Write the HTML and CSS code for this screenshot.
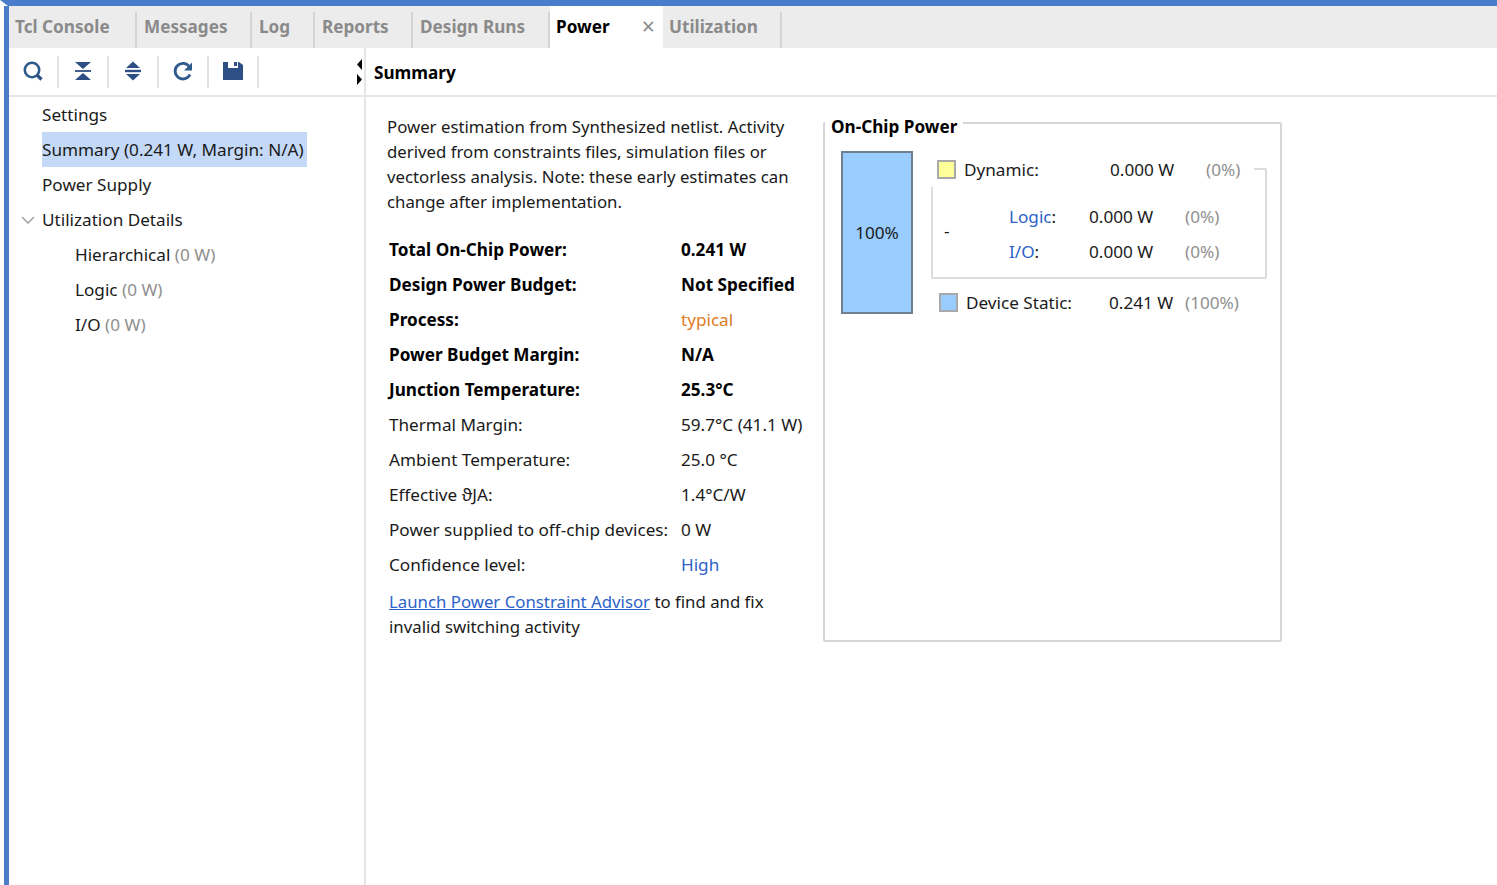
FILE: index.html
```html
<!DOCTYPE html>
<html lang="en">
<head>
    <meta charset="UTF-8">
    <title>Power</title>
    <link rel="stylesheet" href="styles.css">
</head>
<body>
<div class="frame">
    <div class="tabs">
        <div class="tab">Tcl Console</div>
        <div class="tab tab-messages">Messages</div>
        <div class="tab tab-log">Log</div>
        <div class="tab tab-reports">Reports</div>
        <div class="tab tab-runs">Design Runs</div>
        <div class="tab-active"><span>Power</span><span class="tab-close">&#215;</span></div>
        <div class="tab tab-util">Utilization</div>
    </div>
    <div class="main">
        <div class="side">
            <div class="toolbar">
                <div class="tool">
                    <svg width="22" height="22" viewBox="0 0 22 22"><circle cx="10" cy="10" r="7.200" fill="none" stroke="#2e5a8c" stroke-width="2.600"/><path d="M15 15l4.500 4.500" stroke="#2e4f85" stroke-width="3.200"/></svg>
                </div>
                <div class="tool">
                    <svg width="22" height="22" viewBox="0 0 22 22"><path d="M3 2h16l-8 7zM3 20h16l-8-7z" fill="#2e4f85"/><path d="M3 11h16" stroke="#2e4f85" stroke-width="1.800"/></svg>
                </div>
                <div class="tool">
                    <svg width="22" height="22" viewBox="0 0 22 22"><path d="M11 1.500l7 6.500H4zM11 20.500l7-6.500H4z" fill="#2e4f85"/><path d="M3 11h16" stroke="#2e4f85" stroke-width="2.400"/></svg>
                </div>
                <div class="tool">
                    <svg width="22" height="22" viewBox="0 0 22 22"><path d="M18 14.500a7.800 7.800 0 1 1-.8-8" fill="none" stroke="#2e5a8c" stroke-width="2.800"/><path d="M20 2.500v8h-8z" fill="#2e5a8c"/></svg>
                </div>
                <div class="tool">
                    <svg width="22" height="22" viewBox="0 0 22 22"><path d="M1 2h5v6h10V2h1l4 3v15H1z" fill="#2e4f85"/><path d="M12 2h3v4h-3z" fill="#2e4f85"/></svg>
                </div>
                <div class="tool-last"></div>
                <div class="grip">
                    <svg width="8" height="28" viewBox="0 0 8 28"><path d="M6 1v11L1 6.500zM1 16v11l5-5.500z" fill="#000"/></svg>
                </div>
            </div>
            <div class="tree">
                <div class="node">Settings</div>
                <div class="node"><span class="node-sel">Summary (0.241 W, Margin: N/A)</span></div>
                <div class="node">Power Supply</div>
                <div class="node node-parent">
                    <svg class="chev" width="14" height="14" viewBox="0 0 14 14"><path d="M1 4l6 6 6-6" fill="none" stroke="#999" stroke-width="1.300"/></svg>
                    Utilization Details
                </div>
                <div class="node node-sub">Hierarchical <span class="muted">(0 W)</span></div>
                <div class="node node-sub">Logic <span class="muted">(0 W)</span></div>
                <div class="node node-sub">I/O <span class="muted">(0 W)</span></div>
            </div>
        </div>
        <div class="content">
            <div class="title-bar">Summary</div>
            <div class="report">
                <div class="info">
                    <p class="intro">Power estimation from Synthesized netlist. Activity derived from constraints files, simulation files or vectorless analysis. Note: these early estimates can change after implementation.</p>
                    <div class="stats">
                        <b>Total On-Chip Power:</b><b>0.241 W</b>
                        <b>Design Power Budget:</b><b>Not Specified</b>
                        <b>Process:</b><span class="orange">typical</span>
                        <b>Power Budget Margin:</b><b>N/A</b>
                        <b>Junction Temperature:</b><b>25.3°C</b>
                        <span>Thermal Margin:</span><span>59.7°C (41.1 W)</span>
                        <span>Ambient Temperature:</span><span>25.0 °C</span>
                        <span>Effective &#977;JA:</span><span>1.4°C/W</span>
                        <span>Power supplied to off-chip devices:</span><span>0 W</span>
                        <span>Confidence level:</span><span class="blue">High</span>
                    </div>
                    <p class="advisor"><a href="#">Launch Power Constraint Advisor</a> to find and fix invalid switching activity</p>
                </div>
                <div class="chip">
                    <div class="chip-title">On-Chip Power</div>
                    <div class="bar">100%</div>
                    <div class="legend">
                        <div class="row row-dynamic">
                            <i class="swatch yellow"></i>
                            <span class="row-name">Dynamic:</span>
                            <span class="row-val">0.000 W</span>
                            <span class="muted">(0%)</span>
                        </div>
                        <div class="nested">
                            <span class="dash">-</span>
                            <div class="nested-rows">
                                <div class="sub"><span class="sub-name"><span class="blue">Logic</span>:</span><span class="sub-val">0.000 W</span><span class="muted">(0%)</span></div>
                                <div class="sub"><span class="sub-name"><span class="blue">I/O</span>:</span><span class="sub-val">0.000 W</span><span class="muted">(0%)</span></div>
                            </div>
                        </div>
                        <div class="row row-static">
                            <i class="swatch sky"></i>
                            <span class="row-name">Device Static:</span>
                            <span class="row-val">0.241 W</span>
                            <span class="muted">(100%)</span>
                        </div>
                    </div>
                </div>
            </div>
        </div>
    </div>
</div>
</body>
</html>
```

FILE: styles.css
```css
html, body {
    margin: 0;
    height: 100%;
    background: #fff;
}

.frame {
    box-sizing: border-box;
    height: 885px;
    border-top: 6px solid #4a7dc9;
    border-left: 8px solid #fff;
    font-family: "Noto Sans", "Open Sans", sans-serif;
    font-size: 17.15px;
    color: #1a1a1a;
    position: relative;
}

.frame::before {
    content: "";
    position: absolute;
    left: -4px;
    top: 0;
    bottom: 0;
    width: 5px;
    background: #4a7dc9;
}

.tabs {
    display: flex;
    height: 42px;
    background: #ececec;
    margin-left: 1px;
}

.tab {
    box-sizing: border-box;
    height: 36px;
    width: 128px;
    margin-top: 6px;
    padding: 0 0 0 6px;
    line-height: 30px;
    font-weight: 700;
    color: #8a8a8a;
    border-right: 2px solid #d4d4d4;
    white-space: nowrap;
}

.tab-messages { width: 115px; padding-left: 7px; }
.tab-log { width: 63px; padding-left: 7px; }
.tab-reports { width: 98px; padding-left: 7px; }
.tab-runs { width: 137px; padding-left: 7px; }
.tab-util { width: 119px; padding-left: 6px; }

.tab-active {
    box-sizing: border-box;
    display: flex;
    justify-content: space-between;
    width: 113px;
    padding: 0 8px 0 6px;
    line-height: 42px;
    background: #fff;
    font-weight: 700;
    color: #000;
}

.tab-close {
    font-size: 23px;
    font-weight: 400;
    line-height: 40px;
    color: #8a8a8a;
}

.main {
    display: flex;
    height: 837px;
}

.side {
    box-sizing: border-box;
    width: 358px;
    flex: none;
    border-right: 2px solid #e6e6e6;
}

.toolbar {
    display: flex;
    align-items: center;
    height: 47px;
    border-bottom: 2px solid #e6e6e6;
    padding-left: 1px;
}

.tool {
    box-sizing: border-box;
    width: 50px;
    height: 32px;
    display: flex;
    align-items: center;
    justify-content: center;
    border-right: 2px solid #e2e2e2;
}

.tool svg {
    margin-top: -1px;
}

.tool-last {
    flex: 1;
}

.grip {
    display: flex;
}

.tree {
    padding-top: 0;
}

.node {
    height: 35px;
    line-height: 35px;
    padding-left: 34px;
    white-space: nowrap;
    position: relative;
}

.node-sel {
    display: inline-block;
    height: 35px;
    padding-right: 3px;
    background: #c4d9f7;
}

.node-sub {
    padding-left: 67px;
    line-height: 36px;
}

.chev {
    position: absolute;
    left: 13px;
    top: 11px;
}

.muted {
    color: #8f8f8f;
}

.content {
    flex: 1;
}

.title-bar {
    box-sizing: border-box;
    height: 49px;
    padding-left: 8px;
    line-height: 49px;
    font-weight: 700;
    color: #000;
    border-bottom: 2px solid #e6e6e6;
}

.report {
    display: flex;
    align-items: flex-start;
    padding: 17px 0 0 21px;
}

.info {
    width: 436px;
    flex: none;
}

.intro {
    margin: 0;
    width: 420px;
    font-size: 16.8px;
    line-height: 25px;
}

.stats {
    display: grid;
    grid-template-columns: 292px 1fr;
    grid-auto-rows: 35px;
    align-items: center;
    margin: 18px 0 0 2px;
}

.stats b {
    color: #000;
}

.orange {
    color: #e07b1f;
}

.blue {
    color: #2c62c9;
}

.advisor {
    margin: 7px 0 0 2px;
    width: 400px;
    font-size: 16.8px;
    line-height: 25px;
}

.advisor a {
    color: #2c62c9;
}

.chip {
    box-sizing: border-box;
    position: relative;
    display: flex;
    align-items: flex-start;
    width: 459px;
    height: 520px;
    margin-top: 8px;
    padding: 27px 0 0 16px;
    border: 2px solid #d6d6d6;
    border-radius: 2px;
}

.chip-title {
    position: absolute;
    left: 0;
    top: -7px;
    padding: 0 6px;
    line-height: 20px;
    background: #fff;
    font-weight: 700;
    color: #000;
}

.bar {
    box-sizing: border-box;
    width: 72px;
    height: 163px;
    flex: none;
    line-height: 159px;
    text-align: center;
    background: #99ccff;
    border: 2px solid #6f7f8f;
}

.legend {
    margin-left: 18px;
    width: 336px;
}

.row {
    display: flex;
    align-items: center;
    height: 36px;
    position: relative;
    white-space: nowrap;
}

.row-dynamic {
    width: 323px;
    background: #fff;
}

.swatch {
    box-sizing: border-box;
    width: 19px;
    height: 19px;
    border: 2px solid #a9a9a9;
    flex: none;
}

.yellow { background: #ffff99; margin-left: 6px; }
.sky { background: #99ccff; margin-left: 8px; }

.row-name {
    width: 146px;
    margin-left: 8px;
}

.row-static .row-name {
    width: 143px;
}

.row-val {
    width: 96px;
}

.row-static .row-val {
    width: 76px;
}

.nested {
    box-sizing: border-box;
    display: flex;
    align-items: center;
    height: 111px;
    margin-top: -19px;
    padding: 21px 0 0 11px;
    border: 2px solid #dcdcdc;
    border-radius: 2px;
}

.dash {
    width: 65px;
    margin-top: -7px;
}

.nested-rows {
    flex: 1;
}

.sub {
    display: flex;
    height: 35px;
    line-height: 35px;
    white-space: nowrap;
}

.sub-name {
    width: 80px;
}

.sub-val {
    width: 96px;
}

.row-static {
    margin-top: 5px;
}
```
